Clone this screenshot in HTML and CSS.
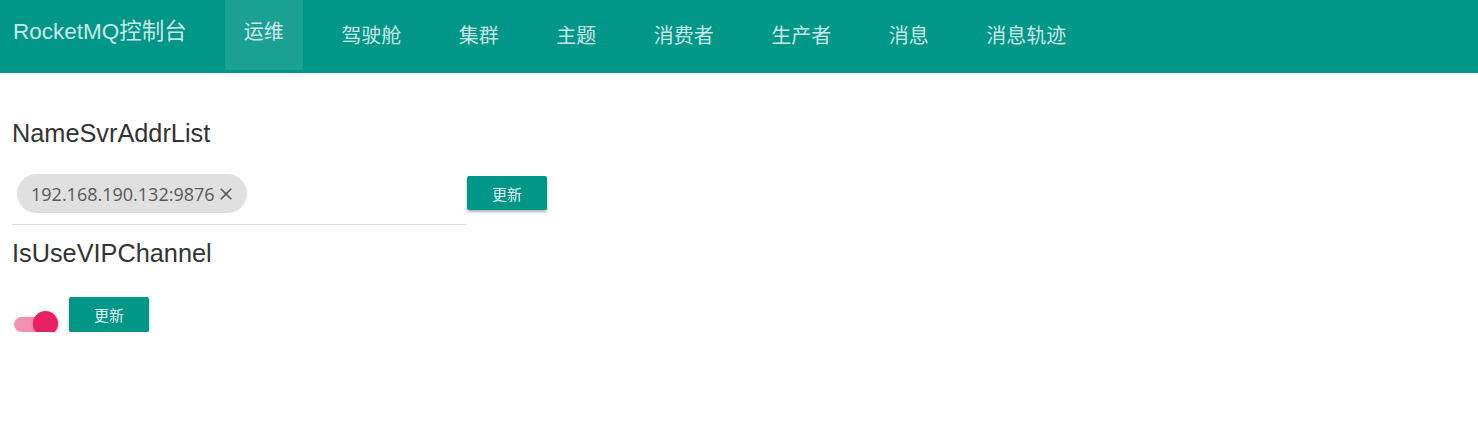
FILE: index.html
```html
<!DOCTYPE html>
<html lang="zh">
<head>
<meta charset="utf-8">
<title>RocketMQ控制台</title>
<link rel="stylesheet" href="styles.css">
</head>
<body>
<header class="nav">
  <div class="brand">RocketMQ控制台</div>
  <ul class="menu">
    <li class="menu-item active">运维</li>
    <li class="menu-item">驾驶舱</li>
    <li class="menu-item">集群</li>
    <li class="menu-item">主题</li>
    <li class="menu-item">消费者</li>
    <li class="menu-item">生产者</li>
    <li class="menu-item">消息</li>
    <li class="menu-item">消息轨迹</li>
  </ul>
</header>
<main class="content">
  <h2 class="section-title first">NameSvrAddrList</h2>
  <div class="addr-row">
    <div class="chips">
      <span class="chip">192.168.190.132:9876<svg class="chip-close" viewBox="0 0 24 24" width="20" height="20"><path d="M19 6.41 17.59 5 12 10.59 6.41 5 5 6.41 10.59 12 5 17.59 6.41 19 12 13.41 17.59 19 19 17.59 13.41 12z" fill="#5f5f5f"/></svg></span>
    </div>
    <button class="btn btn-addr">更新</button>
  </div>
  <h2 class="section-title second">IsUseVIPChannel</h2>
  <div class="vip-row">
    <div class="toggle"><span class="toggle-thumb"></span></div>
    <button class="btn">更新</button>
  </div>
</main>
</body>
</html>
```
FILE: styles.css
```css
* { box-sizing: border-box; }
html, body { margin: 0; padding: 0; background: #fff; }
body {
  font-family: "Liberation Sans", "Noto Sans CJK SC", sans-serif;
  color: #333;
}
.nav {
  height: 73px;
  background: #009688;
  display: flex;
  align-items: flex-start;
}
.brand {
  padding-left: 13px;
  font-size: 22.5px;
  line-height: 64px;
  color: rgba(255,255,255,0.8);
  margin-right: 38px;
  white-space: nowrap;
}
.menu {
  list-style: none;
  margin: 0;
  padding: 0;
  display: flex;
}
.menu-item {
  font-size: 20px;
  color: rgba(255,255,255,0.8);
  padding: 4px 19px 0;
  line-height: 65px;
  height: 70px;
  margin-right: 19.5px;
  white-space: nowrap;
}
.menu-item.active {
  background: rgba(255,255,255,0.1);
  padding-top: 0;
}
.content {
  padding: 0 12px;
}
.section-title {
  font-size: 25.3px;
  font-weight: normal;
  line-height: 30px;
  margin: 0;
  color: #333;
}
.section-title.first { margin-top: 45px; }
.section-title.second { margin-top: 13px; }
.addr-row {
  display: flex;
  align-items: flex-start;
  margin-top: 26px;
}
.chips {
  width: 454px;
  padding: 0 5px 11px;
  border-bottom: 1px solid #dcdcdc;
}
.chip {
  display: inline-flex;
  align-items: center;
  height: 39px;
  padding: 0 11px 0 14px;
  border-radius: 20px;
  background: #e0e0e0;
  font-family: "Open Sans", sans-serif;
  font-size: 18px;
  color: #58585c;
}
.chip-close { margin-left: 1px; margin-top: 1px; }
.btn {
  width: 80px;
  height: 35px;
  border: 0;
  border-radius: 2px;
  background: #009688;
  color: rgba(255,255,255,0.9);
  font-family: "Noto Sans CJK SC", sans-serif;
  font-size: 15px;
  box-shadow: 0 2px 3px rgba(0,0,0,0.3);
  padding: 0;
}
.btn-addr { margin-top: 2px; height: 34px; margin-left: 1px; }
.vip-row {
  display: flex;
  align-items: flex-end;
  margin-top: 29px;
}
.toggle {
  position: relative;
  width: 36px;
  height: 15px;
  margin-left: 2px;
  margin-right: 19px;
  border-radius: 8px;
  background: #f48fb1;
}
.toggle-thumb {
  position: absolute;
  left: 19px;
  top: -6px;
  width: 25px;
  height: 25px;
  border-radius: 50%;
  background: #e91e63;
  box-shadow: 0 1px 3px rgba(0,0,0,0.35);
}
```
